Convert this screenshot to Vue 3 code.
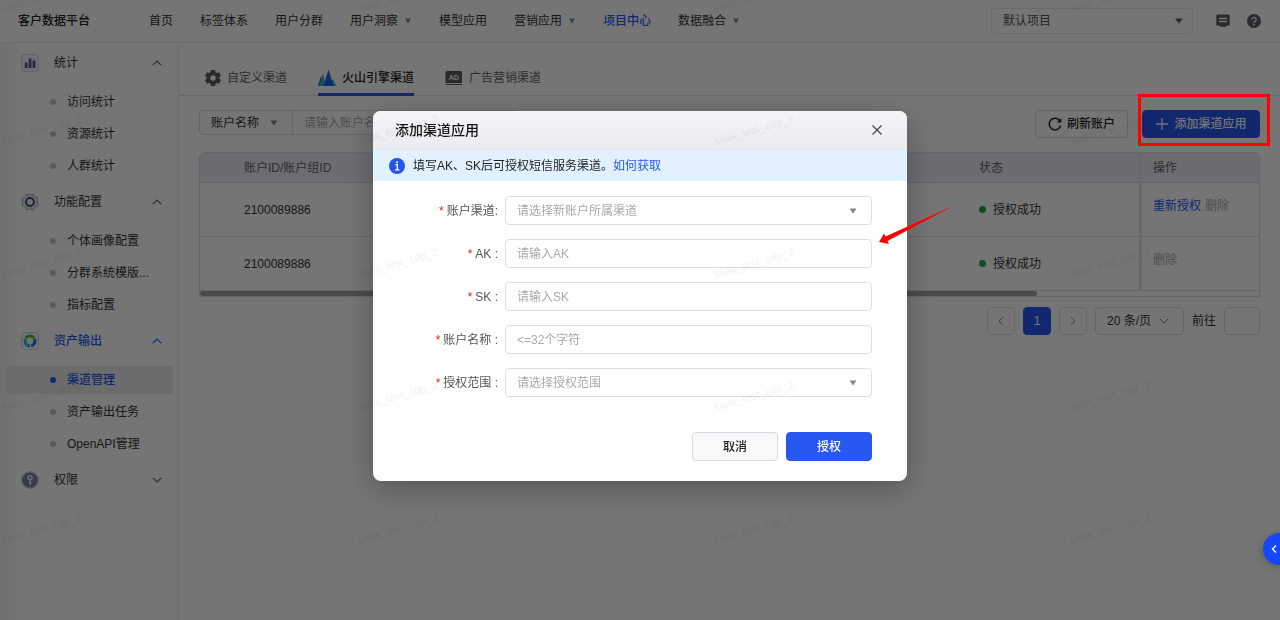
<script setup>
import { ref } from 'vue'

const navItems = [
  { label: '首页' },
  { label: '标签体系' },
  { label: '用户分群' },
  { label: '用户洞察', menu: true },
  { label: '模型应用' },
  { label: '营销应用', menu: true },
  { label: '项目中心', active: true },
  { label: '数据融合', menu: true },
]

const groups = [
  { label: '统计', icon: 'stats', open: true, items: ['访问统计', '资源统计', '人群统计'] },
  { label: '功能配置', icon: 'config', open: true, items: ['个体画像配置', '分群系统模版...', '指标配置'] },
  { label: '资产输出', icon: 'asset', open: true, active: true, items: ['渠道管理', '资产输出任务', 'OpenAPI管理'] },
  { label: '权限', icon: 'key', open: false, items: [] },
]
const currentItem = '渠道管理'

const rows = [
  { id: '2100089886', status: '授权成功', reauth: true },
  { id: '2100089886', status: '授权成功', reauth: false },
]

const fields = [
  { id: 'channel', label: '账户渠道:', placeholder: '请选择新账户所属渠道', select: true },
  { id: 'ak', label: 'AK :', placeholder: '请输入AK' },
  { id: 'sk', label: 'SK :', placeholder: '请输入SK' },
  { id: 'name', label: '账户名称 :', placeholder: '<=32个字符' },
  { id: 'scope', label: '授权范围 :', placeholder: '请选择授权范围', select: true },
]
const form = ref({ channel: '', ak: '', sk: '', name: '', scope: '' })
</script>

<template>
  <div class="app">
    <header class="topbar">
      <div class="brand">客户数据平台</div>
      <nav class="nav" aria-label="主导航">
        <a v-for="item in navItems" :key="item.label" href="#" :class="{ active: item.active }">
          {{ item.label }}
          <svg v-if="item.menu" class="nav-caret" viewBox="0 0 8 6"><path d="M1 0.5h6L4 5.5z" /></svg>
        </a>
      </nav>
      <div class="select-box project">
        <select aria-label="项目"><option>默认项目</option></select>
        <svg class="caret dark" viewBox="0 0 8 6"><path d="M0 0.5h8L4 5.5z" /></svg>
      </div>
      <button class="icon-btn message" aria-label="消息">
        <svg viewBox="0 0 14 14">
          <path d="M1.5 0.5h11a1.2 1.2 0 0 1 1.2 1.2v8.8a1.2 1.2 0 0 1-1.2 1.2H10v1.1H4v-1.1H1.5a1.2 1.2 0 0 1-1.2-1.2V1.7A1.2 1.2 0 0 1 1.5 0.5z" fill="#5b5f66" />
          <path d="M3 4.5h8M3 7.5h8" stroke="#fff" stroke-width="1.3" />
        </svg>
      </button>
      <button class="icon-btn help" aria-label="帮助">
        <svg viewBox="0 0 14 14">
          <circle cx="7" cy="7" r="7" fill="#5b5f66" />
          <path d="M4.9 5.5a2.1 2.1 0 1 1 3.2 1.8c-.8.5-1.1.8-1.1 1.6" fill="none" stroke="#fff" stroke-width="1.3" />
          <circle cx="7" cy="10.7" r="0.9" fill="#fff" />
        </svg>
      </button>
    </header>

    <div class="body">
      <aside class="sidebar">
        <section v-for="group in groups" :key="group.label" class="group">
          <button class="group-head" :class="{ active: group.active }" :aria-expanded="group.open">
            <svg v-if="group.icon === 'stats'" class="group-icon" viewBox="0 0 18 18">
              <rect x="0.5" y="0.5" width="17" height="17" rx="3" fill="#f1f4fb" stroke="#cfd6e6" />
              <path d="M5.2 14V8.5M9.1 14V4.5M13 14V6.5" stroke="#565d85" stroke-width="2.8" />
            </svg>
            <svg v-else-if="group.icon === 'config'" class="group-icon" viewBox="0 0 18 18">
              <path d="M5.500 1.300Q9 2.800 12.500 1.300L14 4.200Q14.600 5 17 5.400L16.400 9 17 12.600Q14.600 13 14 13.800L12.500 16.700Q9 15.200 5.500 16.700L4 13.800Q3.400 13 1 12.600L1.600 9 1 5.400Q3.400 5 4 4.200z" fill="#e4e8f3" stroke="#9fa8c4" stroke-linejoin="round" />
              <circle cx="9" cy="9" r="3.900" fill="#f4f6fc" stroke="#454d75" stroke-width="2" />
            </svg>
            <svg v-else-if="group.icon === 'asset'" class="group-icon" viewBox="0 0 18 18">
              <rect x="0.5" y="0.5" width="17" height="17" rx="3" fill="#f7f8fb" stroke="#cfd6e6" />
              <g fill="none" stroke-width="3">
                <path d="M4.9 6.2A5 5 0 0 1 13.1 6.2" stroke="#4fb53c" />
                <path d="M13.5 6.8A5 5 0 0 1 10.2 13.8" stroke="#2f6bea" />
                <path d="M9 14A5 5 0 0 1 4.5 6.8" stroke="#36b2d8" />
              </g>
            </svg>
            <svg v-else class="group-icon" viewBox="0 0 18 18">
              <circle cx="9" cy="9" r="8.3" fill="#7b829f" stroke="#c3cadb" stroke-width="1.4" />
              <circle cx="9" cy="6.6" r="2" fill="none" stroke="#fff" stroke-width="1.3" />
              <path d="M9 8.600v5.400M9 11.800h1.800" stroke="#fff" stroke-width="1.3" />
            </svg>
            <span>{{ group.label }}</span>
            <svg class="chevron" viewBox="0 0 10 6">
              <path :d="group.open ? 'M0.8 5.2L5 1l4.200 4.200' : 'M0.8 0.8L5 5l4.200-4.200'" />
            </svg>
          </button>
          <ul v-if="group.open">
            <li v-for="item in group.items" :key="item">
              <a href="#" :class="{ current: item === currentItem }">{{ item }}</a>
            </li>
          </ul>
        </section>
      </aside>

      <main class="content">
        <div class="tabs" role="tablist">
          <button role="tab" aria-selected="false">
            <svg class="tab-icon gear" viewBox="0 0 16 16">
              <path fill-rule="evenodd" fill="#5c5c5c" d="M6 0h4l.5 2.200 1.400.8 2.100-.7 2 3.400L14.400 7.200v1.600L16 10.300l-2 3.400-2.100-.7-1.400.8L10 16H6l-.5-2.200-1.400-.8-2.100.7-2-3.400 1.600-1.500V7.200L0 5.700l2-3.400 2.100.7 1.400-.8zM8 5.300a2.700 2.700 0 1 0 0 5.400 2.700 2.700 0 0 0 0-5.400z" />
            </svg>
            自定义渠道
          </button>
          <button role="tab" aria-selected="true" class="active">
            <svg class="tab-icon" viewBox="0 0 18 18">
              <path d="M0 17L3 7l3 10z" fill="#2b5cf0" />
              <path d="M12 17L15 9.500l3 7.500z" fill="#2cc0b4" />
              <path d="M1.500 17L5 4.500l3 12.500z" fill="#2cc0b4" />
              <path d="M5.500 17L10.500 0.500l5 16.500z" fill="#2b5cf0" />
            </svg>
            火山引擎渠道
          </button>
          <button role="tab" aria-selected="false">
            <svg class="tab-icon" viewBox="0 0 18 16">
              <path d="M2 1h13.500a1.500 1.500 0 0 1 1.500 1.500V13H.5V2.500A1.500 1.500 0 0 1 2 1z" fill="#5c5c5c" />
              <path d="M.5 14.500H17" stroke="#5c5c5c" stroke-width="1" />
              <text x="8.800" y="9.500" text-anchor="middle" font-size="7" font-weight="700" fill="#fff">AD</text>
            </svg>
            广告营销渠道
          </button>
        </div>

        <div class="toolbar">
          <div class="search">
            <div class="select-box key">
              <select aria-label="搜索字段"><option>账户名称</option></select>
              <svg class="caret" viewBox="0 0 8 6"><path d="M0.5 0.5h7L4 5.5z" /></svg>
            </div>
            <input type="text" aria-label="账户名称" placeholder="请输入账户名称" />
          </div>
          <div class="actions">
            <button class="btn">
              <svg class="btn-icon" viewBox="0 0 14 14">
                <path d="M12 4A5.8 5.8 0 1 0 12.700 8.500" fill="none" stroke="#222" stroke-width="1.5" />
                <path d="M13.300 1v4.500H8.800z" fill="#222" />
              </svg>
              刷新账户
            </button>
            <div class="marked">
              <button class="btn primary">
                <svg class="btn-icon" viewBox="0 0 14 14"><path d="M7 1v12M1 7h12" stroke="#fff" stroke-width="1.3" /></svg>
                添加渠道应用
              </button>
            </div>
          </div>
        </div>

        <div class="table-box">
          <table>
            <colgroup><col class="c-id" /><col /><col class="c-status" /><col class="c-op" /></colgroup>
            <thead>
              <tr><th class="id">账户ID/账户组ID</th><th></th><th>状态</th><th class="op">操作</th></tr>
            </thead>
            <tbody>
              <tr v-for="(row, i) in rows" :key="i">
                <td class="id">{{ row.id }}</td>
                <td></td>
                <td><span class="status">{{ row.status }}</span></td>
                <td class="op">
                  <a v-if="row.reauth" href="#">重新授权</a>
                  <button disabled>删除</button>
                </td>
              </tr>
            </tbody>
          </table>
          <div class="scrollbar"><div class="thumb"></div></div>
        </div>

        <div class="pager">
          <button class="page-btn" aria-label="上一页">
            <svg viewBox="0 0 6 10"><path d="M5 1L1 5l4 4" /></svg>
          </button>
          <button class="page-btn on">1</button>
          <button class="page-btn" aria-label="下一页">
            <svg viewBox="0 0 6 10"><path d="M1 1l4 4-4 4" /></svg>
          </button>
          <div class="select-box size">
            <select aria-label="每页条数"><option>20 条/页</option></select>
            <svg class="size-caret" viewBox="0 0 10 6"><path d="M1 1l4 4 4-4" /></svg>
          </div>
          <label for="goto">前往</label>
          <input id="goto" type="text" />
        </div>
      </main>
    </div>

    <div class="mask">
      <section class="modal" role="dialog" aria-modal="true" aria-labelledby="modal-title">
        <header class="modal-head">
          <h2 id="modal-title">添加渠道应用</h2>
          <button aria-label="关闭">
            <svg viewBox="0 0 10 10"><path d="M0.5 0.5l9 9M9.5 0.5l-9 9" /></svg>
          </button>
        </header>
        <p class="notice">
          <svg viewBox="0 0 16 16">
            <circle cx="8" cy="8" r="8" fill="#2456e8" />
            <path d="M6.300 6.700h2v5M6 11.800h4.400" fill="none" stroke="#fff" stroke-width="1.3" />
            <circle cx="8" cy="4.200" r="1" fill="#fff" />
          </svg>
          <span>填写AK、SK后可授权短信服务渠道。<a href="#">如何获取</a></span>
        </p>
        <form @submit.prevent>
          <div v-for="f in fields" :key="f.id" class="field">
            <label :for="f.id"><span class="required">*</span>{{ f.label }}</label>
            <div v-if="f.select" class="select-box">
              <select :id="f.id" v-model="form[f.id]" class="empty">
                <option value="">{{ f.placeholder }}</option>
              </select>
              <svg class="caret" viewBox="0 0 8 6"><path d="M0.5 0.5h7L4 5.5z" /></svg>
            </div>
            <input v-else :id="f.id" v-model="form[f.id]" type="text" :placeholder="f.placeholder" />
          </div>
          <div class="modal-foot">
            <button type="button" class="btn cancel">取消</button>
            <button type="submit" class="btn primary">授权</button>
          </div>
        </form>
        <svg class="pointer" viewBox="0 0 76 40" aria-hidden="true">
          <path d="M0 37L5 28.500 6.500 31.500 75 0.500 8.500 36 10 39z" fill="#f00" />
        </svg>
      </section>
    </div>

    <button class="drawer-toggle" aria-label="展开">
      <svg viewBox="0 0 6 8"><path d="M5 0.5L1.500 4 5 7.500" /></svg>
    </button>

    <svg class="watermark" aria-hidden="true">
      <defs>
        <pattern id="wm" width="356" height="133" patternUnits="userSpaceOnUse" y="65">
          <text x="3" y="80" transform="rotate(-16 3 80)">saas_test_cdp_2</text>
        </pattern>
      </defs>
      <rect width="100%" height="100%" fill="url(#wm)" />
    </svg>
  </div>
</template>

<style>
body {
  margin: 0;
  background: #fff;
}
</style>

<style scoped>
.app {
  min-height: 100vh;
  display: flex;
  flex-direction: column;
  font-family: "Liberation Sans", "Noto Sans CJK SC", sans-serif;
  font-size: 12px;
  line-height: 18px;
  color: #333;
  background: #fff;
}
.app * {
  box-sizing: border-box;
}
a {
  color: inherit;
  text-decoration: none;
}
button,
input,
select {
  font: inherit;
  color: inherit;
  margin: 0;
}
button {
  padding: 0;
  border: 0;
  background: none;
}
svg {
  display: block;
  flex: none;
}
input,
.select-box {
  border: 1px solid #dcdfe6;
  border-radius: 4px;
  background: transparent;
}
input {
  padding: 0 11px;
  min-width: 0;
}
input::placeholder {
  color: #a9a9a9;
  opacity: 1;
}
.select-box {
  display: flex;
  position: relative;
}
.select-box select {
  flex: 1;
  min-width: 0;
  appearance: none;
  border: 0;
  background: transparent;
  padding: 0 28px 0 11px;
}
.select-box svg {
  position: absolute;
  right: 14px;
  top: 50%;
  margin-top: -3px;
  pointer-events: none;
}
.caret {
  width: 8px;
  height: 6px;
  fill: #7c878e;
}
.caret.dark {
  fill: #5b5f66;
}

.topbar {
  height: 43px;
  display: flex;
  align-items: center;
  padding: 0 19px 0 18px;
  border-bottom: 1px solid #e9e9e9;
}
.brand {
  width: 131px;
  font-weight: 500;
  color: #222;
}
.nav {
  display: flex;
  gap: 27px;
  flex: 1;
}
.nav a {
  display: flex;
  align-items: center;
  white-space: nowrap;
}
.nav a.active {
  color: #2758f0;
  font-weight: 500;
}
.nav-caret {
  width: 8px;
  height: 6px;
  margin-left: 6px;
  fill: #7c878e;
}
.project {
  width: 202px;
  height: 26px;
  margin-right: 23px;
  border-color: #eaeaea;
  color: #555;
}
.project svg {
  right: 9px;
}
.icon-btn svg {
  width: 14px;
  height: 14px;
}
.help {
  margin-left: 17px;
}

.body {
  flex: 1;
  display: flex;
}
.sidebar {
  flex: none;
  width: 179px;
  padding: 0 5px;
  border-right: 1px solid #ededed;
  background: linear-gradient(90deg, #f0f3f8, #fff 20px);
}
.group-head {
  width: 100%;
  height: 39px;
  display: flex;
  align-items: center;
  padding: 0 11px 0 16px;
}
.group-head span {
  flex: 1;
  margin-left: 15px;
  text-align: left;
}
.group-head.active {
  color: #2758f0;
  font-weight: 500;
}
.group-icon {
  width: 18px;
  height: 18px;
}
.chevron {
  width: 10px;
  height: 6px;
  fill: none;
  stroke: #5b6478;
  stroke-width: 1.2;
}
.active .chevron {
  stroke: #2758f0;
}
.sidebar ul {
  list-style: none;
  margin: 0 0 -2px;
  padding: 6px 0 0;
}
.sidebar li {
  margin-bottom: 4px;
}
.sidebar li a {
  display: flex;
  align-items: center;
  height: 28px;
  border-radius: 4px;
  padding-left: 45px;
}
.sidebar li a::before {
  content: "";
  width: 6px;
  height: 6px;
  border-radius: 50%;
  background: #c4c4c4;
  margin-right: 11px;
}
.sidebar li a.current {
  background: #ebebeb;
  color: #2758f0;
  font-weight: 500;
}
.sidebar li a.current::before {
  background: #2758f0;
}

.content {
  flex: 1;
  min-width: 0;
}
.tabs {
  display: flex;
  gap: 31px;
  height: 53px;
  padding: 19px 26px 0;
  border-bottom: 1px solid #e8e8e8;
}
.tabs button {
  display: flex;
  align-items: center;
  gap: 6px;
  color: #666;
  height: 34px;
  border-bottom: 3px solid transparent;
}
.tabs button.active {
  color: #222;
  font-weight: 500;
  border-bottom-color: #2758f0;
}
.tab-icon {
  width: 18px;
  height: 18px;
}
.tab-icon.gear {
  width: 16px;
  height: 16px;
}
.toolbar {
  display: flex;
  justify-content: space-between;
  align-items: flex-start;
  padding: 14px 20px;
}
.search {
  display: flex;
  height: 25px;
  flex: 0 1 320px;
}
.key {
  width: 94px;
  border-radius: 4px 0 0 4px;
}
.search input {
  flex: 1;
  border-left: 0;
  border-radius: 0 4px 4px 0;
}
.actions {
  display: flex;
  gap: 14px;
}
.btn {
  display: flex;
  align-items: center;
  justify-content: center;
  gap: 5px;
  height: 28px;
  min-width: 93px;
  border: 1px solid #d7dade;
  border-radius: 4px;
  color: #222;
  font-weight: 500;
}
.btn.primary {
  min-width: 118px;
  background: #2758f0;
  border-color: #2758f0;
  color: #fff;
}
.btn-icon {
  width: 14px;
  height: 14px;
}
.marked {
  position: relative;
}
.marked::after {
  content: "";
  position: absolute;
  z-index: 5;
  inset: -16px -10px -8px -4px;
  border: 3px solid #f00;
  pointer-events: none;
}

.table-box {
  margin: 0 20px;
  border: 1px solid #dcdfe6;
  border-radius: 6px 6px 0 0;
  overflow: hidden;
}
table {
  width: 100%;
  table-layout: fixed;
  border-collapse: separate;
  border-spacing: 0;
}
.c-id {
  width: 240px;
}
.c-status {
  width: 171px;
}
.c-op {
  width: 120px;
}
th,
td {
  text-align: left;
  padding: 0 11px;
  border-bottom: 1px solid #dcdfe6;
}
th {
  height: 30px;
  background: #e9edf5;
  color: #666;
  font-weight: 400;
}
td {
  height: 54px;
}
.id {
  padding-left: 44px;
}
.op {
  border-left: 3px solid #e2e4e8;
}
td.op {
  padding-bottom: 8px;
}
.op a {
  color: #2758f0;
  margin-right: 4px;
}
.op button {
  color: #aaa;
}
.status {
  display: flex;
  align-items: center;
}
.status::before {
  content: "";
  width: 7px;
  height: 7px;
  border-radius: 50%;
  background: #1fa556;
  margin-right: 7px;
}
.scrollbar {
  height: 5px;
}
.thumb {
  width: 79%;
  height: 5px;
  border-radius: 3px;
  background: #a3a3a3;
}

.pager {
  display: flex;
  justify-content: flex-end;
  align-items: center;
  gap: 8px;
  padding: 10px 20px;
}
.page-btn {
  width: 28px;
  height: 28px;
  display: flex;
  align-items: center;
  justify-content: center;
  border: 1px solid #dcdfe6;
  border-radius: 4px;
}
.page-btn.on {
  background: #2758f0;
  border-color: #2758f0;
  color: #fff;
}
.page-btn svg {
  width: 6px;
  height: 10px;
  fill: none;
  stroke: #888;
}
.size {
  width: 89px;
  height: 28px;
}
.size .size-caret {
  width: 10px;
  height: 6px;
  fill: none;
  stroke: #777;
}
.pager input {
  width: 36px;
  height: 28px;
}

.mask {
  position: fixed;
  inset: 0;
  display: flex;
  justify-content: center;
  align-items: flex-start;
  padding-top: 111px;
  background: rgba(0, 0, 0, 0.54);
}
.modal {
  position: relative;
  width: 534px;
  border-radius: 8px;
  background: #fff;
  box-shadow: 0 8px 32px rgba(0, 0, 0, 0.28);
}
.modal-head {
  height: 39px;
  display: flex;
  align-items: center;
  justify-content: space-between;
  padding: 0 25px 0 22px;
  border-bottom: 1px solid #e2e4ea;
  border-radius: 8px 8px 0 0;
  background: linear-gradient(#f4f5f7, #ebecf1);
}
.modal-head h2 {
  margin: 0;
  font-size: 14px;
  line-height: 20px;
  font-weight: 500;
  color: #111;
}
.modal-head svg {
  width: 10px;
  height: 10px;
  stroke: #444;
  stroke-width: 1.2;
}
.notice {
  height: 31px;
  margin: 0;
  padding: 0 16px;
  display: flex;
  align-items: center;
  gap: 8px;
  background: #e1f1ff;
  color: #222;
}
.notice svg {
  width: 16px;
  height: 16px;
}
.notice a {
  color: #2758f0;
}
form {
  padding: 15px 35px 20px 0;
  display: flex;
  flex-direction: column;
  gap: 14px;
}
.field {
  display: grid;
  grid-template-columns: 125px 1fr;
  gap: 7px;
  align-items: center;
}
.field label {
  text-align: right;
  color: #555;
}
.required {
  color: #e02020;
  margin-right: 3px;
}
.field input,
.field .select-box {
  height: 29px;
  width: 100%;
}
.empty {
  color: #a9a9a9;
}
.modal-foot {
  display: flex;
  justify-content: flex-end;
  gap: 8px;
  padding-top: 21px;
}
.modal-foot .btn {
  min-width: 86px;
  height: 29px;
}
.cancel {
  background: #f8f9fb;
}
.pointer {
  position: absolute;
  width: 76px;
  height: 40px;
  right: -48px;
  top: 94px;
}
.drawer-toggle {
  position: fixed;
  right: 0;
  bottom: 55px;
  width: 17px;
  height: 32px;
  padding-left: 8px;
  border-radius: 16px 0 0 16px;
  background: #1447ff;
  box-shadow: 0 2px 8px rgba(0, 0, 0, 0.25);
}
.drawer-toggle svg {
  width: 6px;
  height: 8px;
  fill: none;
  stroke: #fff;
  stroke-width: 1.4;
}
.watermark {
  position: fixed;
  inset: 0;
  width: 100%;
  height: 100%;
  pointer-events: none;
}
.watermark text {
  font-size: 11px;
  fill: rgba(0, 0, 0, 0.06);
}
</style>
